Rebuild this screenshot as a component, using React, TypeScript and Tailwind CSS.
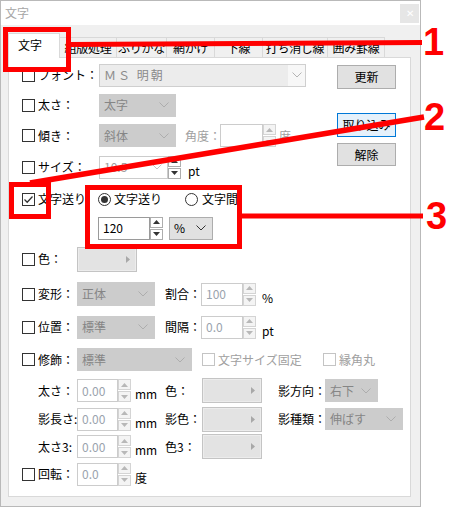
import React from "react";

function Tri({ up, color }: { up?: boolean; color: string }) {
  return (
    <svg width="7" height="4" viewBox="0 0 7 4">
      <path d={up ? "M0 4L3.5 0L7 4Z" : "M0 0L3.5 4L7 0Z"} fill={color} />
    </svg>
  );
}

function Chevron({ color }: { color: string }) {
  return (
    <svg width="10" height="6" viewBox="0 0 10 6">
      <path d="M0.5 0.5L5 5L9.5 0.5" stroke={color} fill="none" strokeWidth="1" />
    </svg>
  );
}

function Check({ on, dim }: { on?: boolean; dim?: boolean }) {
  return (
    <span
      className={`w-[13px] h-[13px] shrink-0 border bg-white flex items-center justify-center ${
        dim ? "border-[#c4c4c4]" : "border-[#333333]"
      }`}
    >
      {on && (
        <svg width="11" height="11" viewBox="0 0 11 11">
          <path d="M1.5 5.5L4.2 8.2L9.5 2.5" stroke="#333" strokeWidth="1.3" fill="none" />
        </svg>
      )}
    </span>
  );
}

function Radio({ on }: { on?: boolean }) {
  return (
    <span className="w-[13px] h-[13px] shrink-0 rounded-full border border-[#333333] bg-white flex items-center justify-center">
      {on && <span className="w-[7px] h-[7px] rounded-full bg-[#333333]" />}
    </span>
  );
}

function SpinBtns({ on }: { on?: boolean }) {
  const c = on ? "#333333" : "#b8b8b8";
  const box = on ? "border-[#adadad] bg-white" : "border-[#d4d4d4] bg-[#f4f4f4]";
  return (
    <div className="w-[13px] h-[23px] flex flex-col gap-px">
      <div className={`flex-1 border flex items-center justify-center ${box}`}>
        <Tri up color={c} />
      </div>
      <div className={`flex-1 border flex items-center justify-center ${box}`}>
        <Tri color={c} />
      </div>
    </div>
  );
}

function Spin({ value, w, on }: { value: string; w: string; on?: boolean }) {
  return (
    <div className="flex h-[23px]">
      <div
        className={`${w} h-full border bg-white flex items-center pl-[4px] leading-none ${
          on ? "border-[#9a9a9a] text-black" : "border-[#cccccc] text-[#9aa3ad]"
        }`}
      >
        {value}
      </div>
      <SpinBtns on={on} />
    </div>
  );
}

function Combo({ text, w, h = "h-[23px]", on }: { text: string; w: string; h?: string; on?: boolean }) {
  return (
    <div
      className={`${w} ${h} border flex items-center justify-between pl-[4px] pr-[6px] leading-none ${
        on ? "bg-[#e1e1e1] border-[#adadad] text-black" : "bg-[#cccccc] border-[#cccccc] text-[#858585]"
      }`}
    >
      <span>{text}</span>
      <Chevron color={on ? "#333333" : "#adadad"} />
    </div>
  );
}

function ColorBox() {
  return (
    <div className="w-[60px] h-[25px] border border-[#c4c4c4] bg-[#e3e3e3] flex items-center justify-end pr-[6px] shadow-[inset_0_0_0_1px_#ececec]">
      <svg width="4" height="7" viewBox="0 0 4 7">
        <path d="M0 0L4 3.5L0 7Z" fill="#a8a8a8" />
      </svg>
    </div>
  );
}

function Btn({ label, h, focus }: { label: string; h: string; focus?: boolean }) {
  return (
    <div
      className={`w-[59px] ${h} border flex items-center justify-center leading-none ${
        focus ? "bg-[#e5f1fb] border-[#0078d7]" : "bg-[#e1e1e1] border-[#adadad]"
      }`}
    >
      {label}
    </div>
  );
}

function Unit({ children, gray }: { children: React.ReactNode; gray?: boolean }) {
  return <span className={`mt-[7px] leading-none ${gray ? "text-[#a0a0a0]" : ""}`}>{children}</span>;
}

const tabs = [
  { label: "組版処理", w: "w-[57px]" },
  { label: "ふりがな", w: "w-[50px]" },
  { label: "網かけ", w: "w-[48px]" },
  { label: "下線", w: "w-[48px]" },
  { label: "打ち消し線", w: "w-[65px]" },
  { label: "囲み罫線", w: "w-[57px]" },
];

export default function App() {
  return (
    <div className="w-[450px] h-[507px] bg-white relative overflow-hidden whitespace-nowrap font-['Noto_Sans_CJK_JP',sans-serif] text-[12px] text-black">
      <div className="w-[421px] h-[507px] border border-[#b9b9b9] bg-[#f0f0f0] flex flex-col">
        {/* title bar */}
        <div className="h-[24px] bg-white flex items-center justify-between pl-[4px] pr-[1px]">
          <span className="text-[#a6a6a6] leading-none">文字</span>
          <div className="w-[19px] h-[19px] bg-[#e6e6e6] flex items-center justify-center text-white text-[10px] leading-none">
            ✕
          </div>
        </div>

        {/* tabs */}
        <div className="flex items-end pl-[7px] pt-[8px] relative z-10 -mb-px">
          <div className="w-[52px] h-[25px] border border-b-0 border-[#d9d9d9] bg-white flex items-center pl-[9px] pb-[2px] leading-none">
            文字
          </div>
          {tabs.map((t) => (
            <div
              key={t.label}
              className={`${t.w} h-[21px] border border-l-0 border-[#d9d9d9] bg-[#f0f0f0] flex items-center justify-center leading-none tracking-[-0.3px]`}
            >
              {t.label}
            </div>
          ))}
        </div>

        {/* panel */}
        <div className="ml-[7px] w-[403px] h-[440px] border border-[#d9d9d9] bg-white flex flex-col pt-[2px] pl-[13px]">
          <div className="flex">
            <div className="w-[315px] flex flex-col">
              <div className="h-[30px] flex items-center">
                <Check />
                <span className="w-[61px] ml-[3px] leading-none">フォント：</span>
                <div className="w-[207px] h-[23px] border border-[#cfcfcf] bg-[#f7f7f7] flex items-center">
                  <div className="w-[188px] h-full bg-[#ececec] flex items-center pl-[4px] text-[#8a8a8a] leading-none tracking-[2px]">
                    ＭＳ 明朝
                  </div>
                  <div className="flex-1 flex items-center justify-center">
                    <Chevron color="#b4b4b4" />
                  </div>
                </div>
              </div>
              <div className="h-[30px] flex items-center">
                <Check />
                <span className="w-[61px] ml-[3px] leading-none">太さ：</span>
                <Combo text="太字" w="w-[77px]" />
              </div>
              <div className="h-[31px] flex items-center">
                <Check />
                <span className="w-[61px] ml-[3px] leading-none">傾き：</span>
                <Combo text="斜体" w="w-[77px]" />
                <span className="w-[35px] ml-[9px] leading-none text-[#a0a0a0]">角度：</span>
                <Spin value="" w="w-[43px]" />
                <span className="ml-[3px] leading-none text-[#a0a0a0]">度</span>
              </div>
              <div className="h-[32px] flex items-center">
                <Check />
                <span className="w-[61px] ml-[3px] leading-none">サイズ：</span>
                <div className="w-[69px] h-[23px] border border-[#cccccc] bg-white flex items-center justify-between pl-[4px] pr-[5px] text-[#a0a0a0] leading-none">
                  <span>10.5</span>
                  <Chevron color="#c4c4c4" />
                </div>
                <SpinBtns on />
                <span className="ml-[7px] flex">
                  <Unit>pt</Unit>
                </span>
              </div>
            </div>
            <div className="flex flex-col pt-[5px]">
              <Btn label="更新" h="h-[24px]" />
              <div className="mt-[24px]">
                <Btn label="取り込み" h="h-[24px]" focus />
              </div>
              <div className="mt-[6px]">
                <Btn label="解除" h="h-[23px]" />
              </div>
            </div>
          </div>

          {/* 文字送り */}
          <div className="h-[32px] flex items-center">
            <Check on />
            <span className="w-[60px] ml-[3px] leading-none">文字送り</span>
            <Radio on />
            <span className="w-[71px] ml-[3px] leading-none">文字送り</span>
            <Radio />
            <span className="ml-[4px] leading-none">文字間</span>
          </div>
          <div className="h-[26px] flex items-center pl-[76px]">
            <Spin value="120" w="w-[52px]" on />
            <div className="ml-[6px]">
              <Combo text="%" w="w-[44px]" on />
            </div>
          </div>

          <div className="h-[36px] flex items-center">
            <Check />
            <span className="w-[39px] ml-[3px] leading-none">色：</span>
            <ColorBox />
          </div>
          <div className="h-[34px] flex items-center">
            <Check />
            <span className="w-[39px] ml-[3px] leading-none">変形：</span>
            <Combo text="正体" w="w-[78px]" h="h-[24px]" />
            <span className="w-[36px] ml-[10px] leading-none">割合：</span>
            <Spin value="100" w="w-[42px]" />
            <span className="ml-[6px] flex">
              <Unit>%</Unit>
            </span>
          </div>
          <div className="h-[32px] flex items-center">
            <Check />
            <span className="w-[39px] ml-[3px] leading-none">位置：</span>
            <Combo text="標準" w="w-[78px]" />
            <span className="w-[36px] ml-[10px] leading-none">間隔：</span>
            <Spin value="0.0" w="w-[42px]" />
            <span className="ml-[6px] flex">
              <Unit>pt</Unit>
            </span>
          </div>
          <div className="h-[33px] flex items-center">
            <Check />
            <span className="w-[39px] ml-[3px] leading-none">修飾：</span>
            <Combo text="標準" w="w-[115px]" />
            <div className="w-[121px] ml-[10px] flex items-center">
              <Check dim />
              <span className="ml-[3px] leading-none text-[#a0a0a0]">文字サイズ固定</span>
            </div>
            <Check dim />
            <span className="ml-[3px] leading-none text-[#a0a0a0]">縁角丸</span>
          </div>

          {/* 修飾 details */}
          <div className="h-[29px] flex items-center">
            <span className="w-[55px] pl-[16px] leading-none">太さ：</span>
            <Spin value="0.00" w="w-[41px]" />
            <span className="w-[34px] pl-[4px] flex">
              <Unit>mm</Unit>
            </span>
            <span className="w-[37px] leading-none">色：</span>
            <ColorBox />
            <span className="w-[47px] ml-[16px] leading-none">影方向：</span>
            <Combo text="右下" w="w-[53px]" />
          </div>
          <div className="h-[28px] flex items-center">
            <span className="w-[55px] pl-[16px] leading-none">影長さ:</span>
            <Spin value="0.00" w="w-[41px]" />
            <span className="w-[34px] pl-[4px] flex">
              <Unit>mm</Unit>
            </span>
            <span className="w-[37px] leading-none">影色：</span>
            <ColorBox />
            <span className="w-[47px] ml-[16px] leading-none">影種類：</span>
            <Combo text="伸ばす" w="w-[78px]" h="h-[22px]" />
          </div>
          <div className="h-[27px] flex items-center">
            <span className="w-[55px] pl-[16px] leading-none">太さ3:</span>
            <Spin value="0.00" w="w-[41px]" />
            <span className="w-[34px] pl-[4px] flex">
              <Unit>mm</Unit>
            </span>
            <span className="w-[37px] leading-none">色3：</span>
            <ColorBox />
          </div>
          <div className="h-[28px] flex items-center">
            <Check />
            <span className="w-[39px] ml-[3px] leading-none">回転：</span>
            <Spin value="0.0" w="w-[41px]" />
            <span className="pl-[4px] flex">
              <Unit>度</Unit>
            </span>
          </div>
        </div>
      </div>

      {/* red annotations */}
      <svg className="absolute inset-0 pointer-events-none z-20" width="450" height="507" viewBox="0 0 450 507">
        <rect x="5.5" y="29.5" width="63" height="40" fill="none" stroke="#ff0000" strokeWidth="5" />
        <line x1="68" y1="44.5" x2="422" y2="42.5" stroke="#ff0000" strokeWidth="5" />
        <rect x="11.5" y="184.5" width="37" height="32" fill="none" stroke="#ff0000" strokeWidth="5" />
        <line x1="30" y1="183" x2="424" y2="117" stroke="#ff0000" strokeWidth="5.5" />
        <rect x="87.5" y="187.5" width="152" height="59" fill="none" stroke="#ff0000" strokeWidth="5" />
        <line x1="240" y1="216" x2="423" y2="216" stroke="#ff0000" strokeWidth="5" />
      </svg>
      <span className="absolute left-[423px] top-[23px] z-20 text-[38px] font-bold leading-none text-[#ff0000] font-['Liberation_Sans',sans-serif]">
        1
      </span>
      <span className="absolute left-[424px] top-[98px] z-20 text-[38px] font-bold leading-none text-[#ff0000] font-['Liberation_Sans',sans-serif]">
        2
      </span>
      <span className="absolute left-[426px] top-[197px] z-20 text-[38px] font-bold leading-none text-[#ff0000] font-['Liberation_Sans',sans-serif]">
        3
      </span>
    </div>
  );
}
